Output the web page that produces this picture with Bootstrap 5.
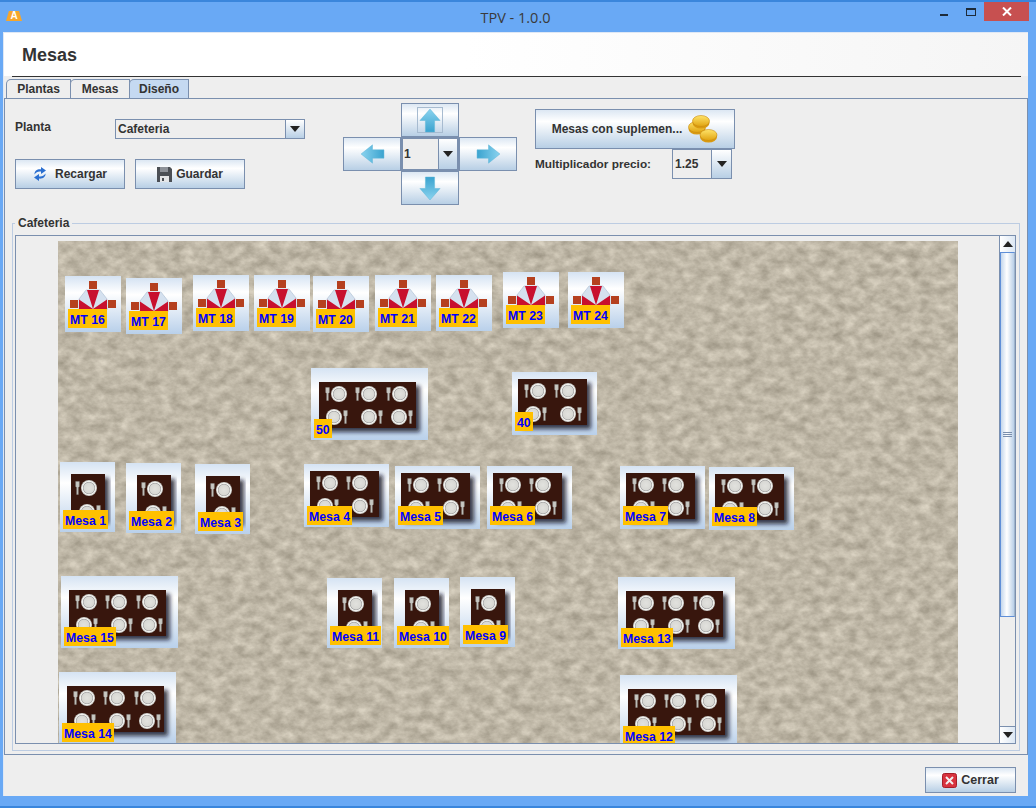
<!doctype html>
<html lang="es">
<head>
<meta charset="utf-8">
<title>TPV - 1.0.0</title>
<link href="https://cdn.jsdelivr.net/npm/bootstrap@5.3.0/dist/css/bootstrap.min.css" rel="stylesheet">
<style>
html,body{margin:0;height:100%;overflow:hidden}
body{width:1036px;height:808px;background:#69a9f5;font:bold 12px/1.2 "Liberation Sans",Arial,sans-serif;color:#333}
.win{width:1036px;height:808px;border-top:2px solid #3a86dc;border-bottom:2px solid #3a86dc;padding:0 8px 10px 3px}
.titlebar{height:30px;font:400 14.5px "Open Sans",sans-serif;color:#3a3a3a}
.logo{left:3px;top:9px;width:16px;height:10px;background:#f7a62b;color:#fff;font:bold 10px/10px "Liberation Sans",sans-serif;text-align:center;clip-path:polygon(18% 0,82% 0,100% 100%,0 100%)}
.wctl{top:0;right:-1px;height:19px}
.wmin{width:8px;height:2px;background:#1d2b3a;margin:12px 18px 0 0}
.wmax{width:10px;height:8px;border:1px solid #1d2b3a;border-top-width:2px;margin:6px 8px 0 0}
.wclose{width:45px;height:19px;background:#c75050;color:#fff}
.client{background:#eee;height:764px;border:1px solid #dfe8f5;border-width:1px 0 0 1px}
.head{height:43px;background:linear-gradient(90deg,#fff 45%,#f5f5f5);padding-left:18px;font-size:18px;line-height:44px;color:#333}
.rule{height:1px;background:#333;margin:0 7px 0 8px}
.tabs{height:21px;padding:2px 0 0 2px;border:0;flex-wrap:nowrap}
.tabs .nav-link{height:20px;padding:2px 0 0;text-align:center;border:1px solid #7a8fae;border-bottom:0;border-radius:5px 0 0 0;background:#eee;color:#333;margin:0;font-weight:700}
.tabs .t1{width:65px}.tabs .t2{width:60px;margin-left:-1px}.tabs .t3{width:60px;background:#c5d9f1;margin-left:-1px}
.tabpanel{height:658px;border:1px solid #7a8fae;margin:0}
.toolbar{height:124px;padding-left:10px}
.col1{width:290px;padding-top:20px}
.plant-label{width:100px;font-weight:700;font-size:12px;line-height:17px}
.combo{border:1px solid #7a8fae;background:#eee;display:flex;align-items:stretch;font-weight:700}
.combo .val{flex:1;padding-left:2px;display:flex;align-items:center;overflow:hidden;color:#333}
.combo .arr{background:linear-gradient(#fff,#b8cfe5);border-left:1px solid #7a8fae;display:flex;align-items:center;justify-content:center}
.tri{width:0;height:0;border-left:5.5px solid transparent;border-right:5.5px solid transparent;border-top:6px solid #222}
.c-planta{width:190px;height:20px}.c-planta .arr{width:19px}
.jbtn{border:1px solid #7a8fae;border-radius:0;background:linear-gradient(#dce7f3,#fff 30%,#b8cfe5);color:#333;font:bold 12px "Liberation Sans",sans-serif;padding:0;display:flex;align-items:center;justify-content:center}
.jbtn:hover{color:#333;border-color:#7a8fae;background:linear-gradient(#dce7f3,#fff 30%,#b8cfe5)}
.b-load{width:110px;height:30px}
.row2{margin-top:20px;gap:10px}
.cross{margin:4px 0 0 38px;display:grid;grid-template-columns:repeat(3,58px);grid-template-rows:34px 34px 34px;width:174px;height:102px}
.cross .up{grid-area:1/2}.cross .lf{grid-area:2/1}.cross .cb{grid-area:2/2;border-width:2px}.cross .cb .val{padding-left:1px}.cross .rt{grid-area:2/3}.cross .dn{grid-area:3/2}
.cross .cb .arr{width:19px}
.focusbox{border:1px solid #a7bbd0;width:26px;height:26px;display:flex;align-items:center;justify-content:center}
.col3{width:200px;margin-left:18px;padding-top:10px}
.b-sup{width:200px;height:40px}
.coins{margin-left:6px}
.mult{height:30px}
.mult-l{width:137px;line-height:30px;font-size:11.8px}
.c-mult{width:60px;height:30px}.c-mult .arr{width:20px}
.fset{position:relative;height:528px;margin:0 7px;border:1px solid #bccce2;padding:11px 3px 0 2px}
.fset-l{position:absolute;left:2px;top:-8px;background:#eee;padding:0 3px;font-size:12px;line-height:14px}
.pane{height:509px;border:1px solid #7a8fae}
.view{width:984px;overflow:hidden;position:relative}
.canvas{position:absolute;left:42px;top:5px;width:900px;height:560px}
.canvas>svg.tex{position:absolute;left:0;top:0}
.tile{position:absolute;background:linear-gradient(#d5e3f3,#fff 30%,#b9d0ea)}
.tile svg{display:block}
.mt{width:56px;height:56px}.big{width:117px;height:72px}.mid{width:85px;height:63px}.sm{width:55px;height:70px}
.tag{position:absolute;left:3px;background:#ffc000;color:#0000ff;font:bold 12.3px/23px "Liberation Sans",sans-serif;padding:0 2px;white-space:nowrap;height:19px}
.mt .tag{top:33px}.big .tag{top:51px}.mid .tag{top:40px}.mid .tag.lo{top:42px}.sm .tag{top:48px}
.sbar{width:16px;border-left:1px solid #7a8fae;background:#eee}
.sbtn{height:16px;background:linear-gradient(90deg,#fff,#dce7f3);display:flex;align-items:center;justify-content:center;flex:none}
.tri-up{width:0;height:0;border-left:5px solid transparent;border-right:5px solid transparent;border-bottom:6px solid #222}
.thumb{height:365px;flex:none;border:1px solid #5f8fd8;border-right-color:#9fb4cc;background:linear-gradient(90deg,#c3d6ec,#fff 45%,#b9cfe8);display:flex;align-items:center;justify-content:center}
.grip{width:9px;height:5px;border-top:1px solid #7a8fae;border-bottom:1px solid #7a8fae;position:relative}
.grip::after{content:"";position:absolute;left:0;right:0;top:1px;height:1px;background:#7a8fae}
.track{background:#eee;border-bottom:1px solid #7a8fae}
.foot{height:41px;padding:12px 12px 0 0}
.b-close{width:91px;height:26px;font-size:12.5px}
.defs{position:absolute;width:0;height:0}
</style>
</head>
<body>
<svg class="defs" aria-hidden="true">
<defs>
<filter id="sand" x="0" y="0" width="100%" height="100%" color-interpolation-filters="sRGB">
<feTurbulence type="fractalNoise" baseFrequency="0.08 0.11" numOctaves="4" seed="7"/>
<feColorMatrix values="0.3 0 0 0 0.595  0.3 0 0 0 0.565  0.3 0 0 0 0.5  0 0 0 0 1"/>
</filter>
<filter id="sh" x="-10%" y="-10%" width="125%" height="130%"><feDropShadow dx="4" dy="4" stdDeviation="2.200" flood-color="#112" flood-opacity=".8"/></filter>
<radialGradient id="pl"><stop offset="0" stop-color="#e2e2de"/><stop offset=".62" stop-color="#d8d8d4"/><stop offset=".72" stop-color="#aaa"/><stop offset=".82" stop-color="#f5f5f2"/><stop offset="1" stop-color="#bdbdb9"/></radialGradient>
<linearGradient id="ar" x1="0" y1="0" x2="0" y2="1"><stop offset="0" stop-color="#8ad3ef"/><stop offset="1" stop-color="#3aa3cf"/></linearGradient>
<linearGradient id="au" x1="0" y1="0" x2="0" y2="1"><stop offset="0" stop-color="#ffe46a"/><stop offset="1" stop-color="#e0a310"/></linearGradient>
<g id="fk"><path d="M-1.800-6.500h3.600v5l-1 1V6.500H-.8V-.5l-1-1z" fill="#c8c8c3" stroke="#8c8c88" stroke-width=".5"/></g>
<g id="pt"><circle r="8" fill="url(#pl)"/></g>
<g id="st"><use href="#pt"/><use href="#fk" x="-11.500"/></g>
<g id="sb"><use href="#pt"/><use href="#fk" x="11.500"/></g>
<g id="up"><path d="M12 1 23 12h-6v11H7V12H1z" fill="url(#ar)" stroke="#5fb6d8" stroke-width=".5"/></g>
</defs>
</svg>

<div class="win">
  <div class="titlebar position-relative d-flex align-items-center justify-content-center">
    <span class="logo position-absolute">A</span>
    <span>TPV - 1.0.0</span>
    <div class="wctl position-absolute d-flex align-items-start">
      <span class="wmin"></span><span class="wmax"></span>
      <span class="wclose d-flex align-items-center justify-content-center"><svg width="10" height="9" viewBox="0 0 10 9"><path d="M1 .5l8 8M9 .5l-8 8" stroke="#fff" stroke-width="2"/></svg></span>
    </div>
  </div>

  <div class="client d-flex flex-column">
    <div class="head">Mesas</div>
    <div class="rule"></div>
    <ul class="nav nav-tabs tabs">
      <li class="nav-item"><a class="nav-link t1" href="#">Plantas</a></li>
      <li class="nav-item"><a class="nav-link t2" href="#">Mesas</a></li>
      <li class="nav-item"><a class="nav-link t3" href="#">Diseño</a></li>
    </ul>
    <div class="tabpanel">
      <div class="toolbar d-flex">
        <div class="col1">
          <div class="d-flex align-items-start">
            <span class="plant-label">Planta</span>
            <div class="combo c-planta"><span class="val">Cafeteria</span><span class="arr"><i class="tri"></i></span></div>
          </div>
          <div class="d-flex row2">
            <button class="btn jbtn b-load" type="button">
              <svg class="me-2" width="14" height="16" viewBox="0 0 14 16"><path d="M1.500 8.500C1.300 4.800 4.500 3 8 3.400V1l5 3.600-5 3.400V5.600c-2.600-.4-5 .4-6.500 2.900z" fill="#2b6fd0"/><path d="M12.500 7.500c.2 3.700-3 5.500-6.500 5.100V15L1 11.400 6 8v2.400c2.600.4 5-.4 6.500-2.900z" fill="#2b6fd0"/></svg>Recargar</button>
            <button class="btn jbtn b-load" type="button">
              <svg class="me-1" width="15" height="15" viewBox="0 0 15 15"><path d="M0 0h13l2 2v13H0z" fill="#4b4f55"/><path d="M3 0h8v5H3z" fill="#8d9198"/><path d="M3 9h9v6H3z" fill="#e4e6e8"/><path d="M5 11h2v3H5z" fill="#4b4f55"/></svg>Guardar</button>
          </div>
        </div>
        <div class="cross">
          <button class="btn jbtn up" type="button"><span class="focusbox"><svg width="22" height="25" viewBox="0 0 24 24" preserveAspectRatio="none"><use href="#up"/></svg></span></button>
          <button class="btn jbtn lf" type="button"><svg width="25" height="20" viewBox="0 0 24 24" preserveAspectRatio="none"><use href="#up" transform="rotate(-90 12 12)"/></svg></button>
          <div class="combo cb"><span class="val">1</span><span class="arr"><i class="tri"></i></span></div>
          <button class="btn jbtn rt" type="button"><svg width="25" height="20" viewBox="0 0 24 24" preserveAspectRatio="none"><use href="#up" transform="rotate(90 12 12)"/></svg></button>
          <button class="btn jbtn dn" type="button"><svg width="22" height="25" viewBox="0 0 24 24" preserveAspectRatio="none"><use href="#up" transform="rotate(180 12 12)"/></svg></button>
        </div>
        <div class="col3">
          <button class="btn jbtn b-sup" type="button"><span>Mesas con suplemen...</span>
            <svg class="coins" width="30" height="28" viewBox="0 0 30 28"><ellipse cx="9" cy="14" rx="8.500" ry="5.500" fill="#d99a10"/><ellipse cx="9" cy="12" rx="8.500" ry="5.500" fill="url(#au)" stroke="#c98c10" stroke-width=".6"/><ellipse cx="13" cy="8" rx="8.500" ry="5.500" fill="#d99a10"/><ellipse cx="13" cy="6" rx="8.500" ry="5.500" fill="url(#au)" stroke="#c98c10" stroke-width=".6"/><ellipse cx="20.500" cy="22" rx="8.500" ry="5.500" fill="#d99a10"/><ellipse cx="20.500" cy="20" rx="8.500" ry="5.500" fill="url(#au)" stroke="#c98c10" stroke-width=".6"/></svg>
          </button>
          <div class="d-flex mult">
            <span class="mult-l">Multiplicador precio:</span>
            <div class="combo c-mult"><span class="val">1.25</span><span class="arr"><i class="tri"></i></span></div>
          </div>
        </div>
      </div>

      <div class="fset">
        <span class="fset-l">Cafeteria</span>
        <div class="pane d-flex">
          <div class="view flex-grow-1">
            <div class="canvas">
              <svg class="tex" width="900" height="560"><rect width="900" height="560" filter="url(#sand)"/></svg>

              <div class="tile mt" style="left:7px;top:35px"><svg width="56" height="56"><use href="#um"/></svg><span class="tag">MT 16</span></div>
              <div class="tile mt" style="left:68px;top:37px"><svg width="56" height="56"><use href="#um"/></svg><span class="tag">MT 17</span></div>
              <div class="tile mt" style="left:135px;top:34px"><svg width="56" height="56"><use href="#um"/></svg><span class="tag">MT 18</span></div>
              <div class="tile mt" style="left:196px;top:34px"><svg width="56" height="56"><use href="#um"/></svg><span class="tag">MT 19</span></div>
              <div class="tile mt" style="left:255px;top:35px"><svg width="56" height="56"><use href="#um"/></svg><span class="tag">MT 20</span></div>
              <div class="tile mt" style="left:317px;top:34px"><svg width="56" height="56"><use href="#um"/></svg><span class="tag">MT 21</span></div>
              <div class="tile mt" style="left:378px;top:34px"><svg width="56" height="56"><use href="#um"/></svg><span class="tag">MT 22</span></div>
              <div class="tile mt" style="left:445px;top:31px"><svg width="56" height="56"><use href="#um"/></svg><span class="tag">MT 23</span></div>
              <div class="tile mt" style="left:510px;top:31px"><svg width="56" height="56"><use href="#um"/></svg><span class="tag">MT 24</span></div>

              <div class="tile big" style="left:253px;top:127px"><svg width="117" height="72"><use href="#t6"/></svg><span class="tag">50</span></div>
              <div class="tile mid" style="left:454px;top:131px"><svg width="85" height="63"><use href="#t4"/></svg><span class="tag">40</span></div>

              <div class="tile sm" style="left:2px;top:221px"><svg width="55" height="70"><use href="#t2"/></svg><span class="tag">Mesa 1</span></div>
              <div class="tile sm" style="left:68px;top:222px"><svg width="55" height="70"><use href="#t2"/></svg><span class="tag">Mesa 2</span></div>
              <div class="tile sm" style="left:137px;top:223px"><svg width="55" height="70"><use href="#t2"/></svg><span class="tag">Mesa 3</span></div>
              <div class="tile mid" style="left:246px;top:223px"><svg width="85" height="63"><use href="#t4"/></svg><span class="tag lo">Mesa 4</span></div>
              <div class="tile mid" style="left:337px;top:225px"><svg width="85" height="63"><use href="#t4"/></svg><span class="tag">Mesa 5</span></div>
              <div class="tile mid" style="left:429px;top:225px"><svg width="85" height="63"><use href="#t4"/></svg><span class="tag">Mesa 6</span></div>
              <div class="tile mid" style="left:562px;top:225px"><svg width="85" height="63"><use href="#t4"/></svg><span class="tag">Mesa 7</span></div>
              <div class="tile mid" style="left:651px;top:226px"><svg width="85" height="63"><use href="#t4"/></svg><span class="tag">Mesa 8</span></div>

              <div class="tile big" style="left:3px;top:335px"><svg width="117" height="72"><use href="#t6"/></svg><span class="tag">Mesa 15</span></div>
              <div class="tile sm" style="left:269px;top:337px"><svg width="55" height="70"><use href="#t2"/></svg><span class="tag">Mesa 11</span></div>
              <div class="tile sm" style="left:336px;top:337px"><svg width="55" height="70"><use href="#t2"/></svg><span class="tag">Mesa 10</span></div>
              <div class="tile sm" style="left:402px;top:336px"><svg width="55" height="70"><use href="#t2"/></svg><span class="tag">Mesa 9</span></div>
              <div class="tile big" style="left:560px;top:336px"><svg width="117" height="72"><use href="#t6"/></svg><span class="tag">Mesa 13</span></div>
              <div class="tile big" style="left:1px;top:431px"><svg width="117" height="72"><use href="#t6"/></svg><span class="tag">Mesa 14</span></div>
              <div class="tile big" style="left:562px;top:434px"><svg width="117" height="72"><use href="#t6"/></svg><span class="tag">Mesa 12</span></div>
            </div>
          </div>
          <div class="sbar d-flex flex-column">
            <div class="sbtn"><i class="tri-up"></i></div>
            <div class="thumb"><i class="grip"></i></div>
            <div class="track flex-grow-1"></div>
            <div class="sbtn"><i class="tri"></i></div>
          </div>
        </div>
      </div>
    </div>
    <div class="foot d-flex justify-content-end">
      <button class="btn jbtn b-close" type="button">
        <svg class="me-1" width="15" height="15" viewBox="0 0 15 15"><rect x=".5" y=".5" width="14" height="14" rx="2" fill="#d8333f" stroke="#a51f2a"/><path d="M4 4l7 7M11 4l-7 7" stroke="#f2f2f2" stroke-width="2"/></svg>Cerrar</button>
    </div>
  </div>
</div>

<svg class="defs" aria-hidden="true">
<defs>
<g id="um">
  <path d="M24 5h8v8h-8zM5 24h8v8H5zM43 24h8v8h-8z" fill="#b5401f"/>
  <path d="M21 14h14l7 9v11l-7 6H21l-7-6V23z" fill="#d5e1ef" stroke="#9fb2c8" stroke-width=".5"/>
  <path d="M22 14h12l-6 19zM14 23.500v10L28 33zM42 23.500v10L28 33zM28 33l-8 9h-5zM28 33l8 9h5z" fill="#c8102e"/>
</g>
<g id="t6">
  <rect x="8" y="14" width="97" height="46" fill="#381208" filter="url(#sh)"/>
  <use href="#st" x="28" y="26"/><use href="#st" x="58" y="26"/><use href="#st" x="89" y="26"/>
  <use href="#sb" x="23" y="49"/><use href="#sb" x="58" y="49"/><use href="#sb" x="88" y="49"/>
</g>
<g id="t4">
  <rect x="6" y="7" width="69" height="46" fill="#381208" filter="url(#sh)"/>
  <use href="#st" x="26" y="19"/><use href="#st" x="56" y="19"/>
  <use href="#sb" x="21" y="42"/><use href="#sb" x="56" y="42"/>
</g>
<g id="t2">
  <rect x="11" y="12" width="34" height="46" fill="#381208" filter="url(#sh)"/>
  <use href="#st" x="29" y="26"/><use href="#sb" x="27" y="50"/>
</g>
</defs>
</svg>
<script src="https://cdn.jsdelivr.net/npm/bootstrap@5.3.0/dist/js/bootstrap.bundle.min.js"></script>
</body>
</html>
